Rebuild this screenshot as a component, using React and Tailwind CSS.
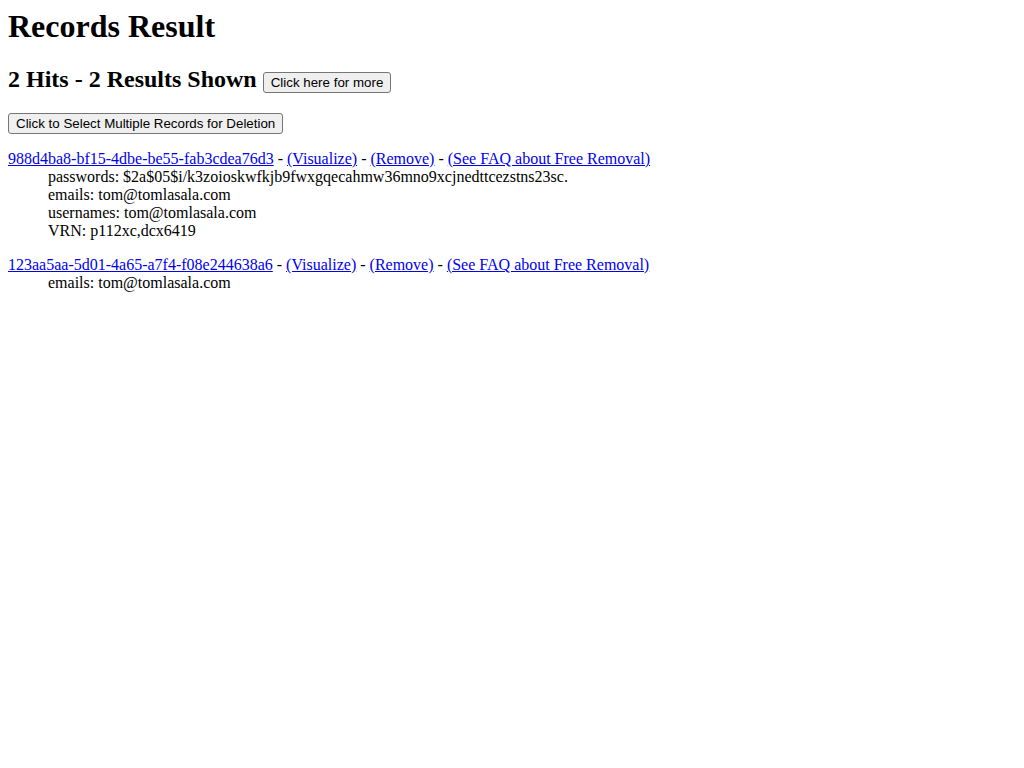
export default function App() {
  const records = [
    {
      id: "988d4ba8-bf15-4dbe-be55-fab3cdea76d3",
      fields: [
        "passwords: $2a$05$i/k3zoioskwfkjb9fwxgqecahmw36mno9xcjnedttcezstns23sc.",
        "emails: tom@tomlasala.com",
        "usernames: tom@tomlasala.com",
        "VRN: p112xc,dcx6419",
      ],
    },
    {
      id: "123aa5aa-5d01-4a65-a7f4-f08e244638a6",
      fields: ["emails: tom@tomlasala.com"],
    },
  ];

  const link = "text-[#0000ee] underline";
  const btn =
    "font-['Liberation_Sans',Arial,sans-serif] font-normal text-[13.33px] leading-[normal] px-[7px] py-[2px] bg-[#efefef] border border-[#767676] rounded-[3px] text-black align-baseline";

  return (
    <div className="p-2 font-['Liberation_Serif','Times_New_Roman',serif] text-black text-base leading-[normal] bg-white min-h-screen">
      <h1 className="text-[32px] font-bold leading-[normal]">Records Result</h1>
      <h2 className="mt-[21px] mb-[20px] text-[24px] font-bold leading-[normal]">
        2 Hits - 2 Results Shown{" "}
        <button className={btn}>Click here for more</button>
      </h2>
      <div className="mb-[16px]">
        <button className={btn}>Click to Select Multiple Records for Deletion</button>
      </div>
      {records.map((r) => (
        <div key={r.id} className="mb-4">
          <div>
            <a href="#" className={link}>{r.id}</a> -{" "}
            <a href="#" className={link}>(Visualize)</a> -{" "}
            <a href="#" className={link}>(Remove)</a> -{" "}
            <a href="#" className={link}>(See FAQ about Free Removal)</a>
          </div>
          <div className="ml-10">
            {r.fields.map((f) => (
              <div key={f}>{f}</div>
            ))}
          </div>
        </div>
      ))}
    </div>
  );
}
